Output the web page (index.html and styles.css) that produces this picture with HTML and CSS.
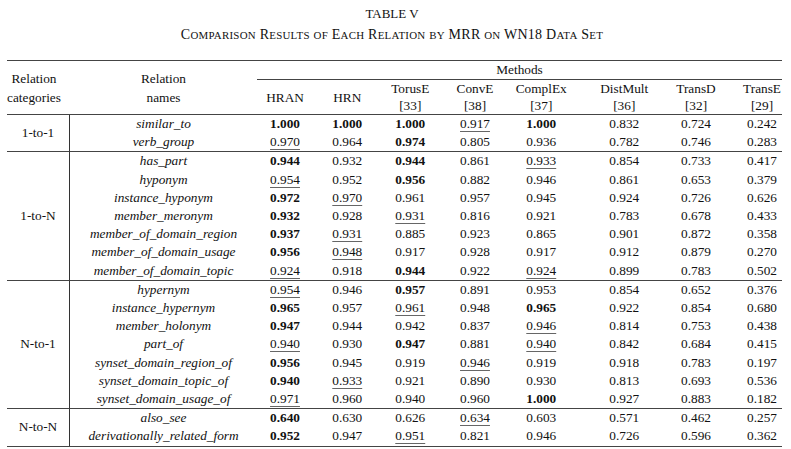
FILE: index.html
```html
<!DOCTYPE html>
<html lang="en">
<head>
<meta charset="utf-8">
<title>Table V</title>
<link rel="stylesheet" href="styles.css">
</head>
<body>
<div class="page">
  <div class="caption">
    <div class="label">TABLE V</div>
    <div class="title">C<span class="sc">omparison</span> R<span class="sc">esults</span> <span class="sc">of</span> E<span class="sc">ach</span> R<span class="sc">elation</span> <span class="sc">by</span> MRR <span class="sc">on</span> WN18 D<span class="sc">ata</span> S<span class="sc">et</span></div>
  </div>
  <table class="results">
    <colgroup>
      <col class="w-cat"><col class="w-name">
      <col class="w-hran"><col class="w-hrn"><col class="w-torus"><col class="w-conv">
      <col class="w-compl"><col class="w-dist"><col class="w-transd"><col class="w-transe">
    </colgroup>
    <thead>
      <tr class="h1">
        <th rowspan="2" class="cat-head">Relation<br>categories</th>
        <th rowspan="2">Relation<br>names</th>
        <th colspan="8" class="methods">Methods</th>
      </tr>
      <tr class="h2">
        <th>HRAN</th><th>HRN</th><th>TorusE<br>[33]</th><th>ConvE<br>[38]</th>
        <th>ComplEx<br>[37]</th><th>DistMult<br>[36]</th><th>TransD<br>[32]</th><th>TransE<br>[29]</th>
      </tr>
    </thead>
    <tbody>
      <tr><td rowspan="2" class="cat">1-to-1</td><td class="rel">similar_to</td><td class="b">1.000</td><td class="b">1.000</td><td class="b">1.000</td><td class="u">0.917</td><td class="b">1.000</td><td>0.832</td><td>0.724</td><td>0.242</td></tr>
      <tr><td class="rel">verb_group</td><td class="u">0.970</td><td>0.964</td><td class="b">0.974</td><td>0.805</td><td>0.936</td><td>0.782</td><td>0.746</td><td>0.283</td></tr>
    </tbody>
    <tbody>
      <tr><td rowspan="7" class="cat">1-to-N</td><td class="rel">has_part</td><td class="b">0.944</td><td>0.932</td><td class="b">0.944</td><td>0.861</td><td class="u">0.933</td><td>0.854</td><td>0.733</td><td>0.417</td></tr>
      <tr><td class="rel">hyponym</td><td class="u">0.954</td><td>0.952</td><td class="b">0.956</td><td>0.882</td><td>0.946</td><td>0.861</td><td>0.653</td><td>0.379</td></tr>
      <tr><td class="rel">instance_hyponym</td><td class="b">0.972</td><td class="u">0.970</td><td>0.961</td><td>0.957</td><td>0.945</td><td>0.924</td><td>0.726</td><td>0.626</td></tr>
      <tr><td class="rel">member_meronym</td><td class="b">0.932</td><td>0.928</td><td class="u">0.931</td><td>0.816</td><td>0.921</td><td>0.783</td><td>0.678</td><td>0.433</td></tr>
      <tr><td class="rel">member_of_domain_region</td><td class="b">0.937</td><td class="u">0.931</td><td>0.885</td><td>0.923</td><td>0.865</td><td>0.901</td><td>0.872</td><td>0.358</td></tr>
      <tr><td class="rel">member_of_domain_usage</td><td class="b">0.956</td><td class="u">0.948</td><td>0.917</td><td>0.928</td><td>0.917</td><td>0.912</td><td>0.879</td><td>0.270</td></tr>
      <tr><td class="rel">member_of_domain_topic</td><td class="u">0.924</td><td>0.918</td><td class="b">0.944</td><td>0.922</td><td class="u">0.924</td><td>0.899</td><td>0.783</td><td>0.502</td></tr>
    </tbody>
    <tbody>
      <tr><td rowspan="7" class="cat">N-to-1</td><td class="rel">hypernym</td><td class="u">0.954</td><td>0.946</td><td class="b">0.957</td><td>0.891</td><td>0.953</td><td>0.854</td><td>0.652</td><td>0.376</td></tr>
      <tr><td class="rel">instance_hypernym</td><td class="b">0.965</td><td>0.957</td><td class="u">0.961</td><td>0.948</td><td class="b">0.965</td><td>0.922</td><td>0.854</td><td>0.680</td></tr>
      <tr><td class="rel">member_holonym</td><td class="b">0.947</td><td>0.944</td><td>0.942</td><td>0.837</td><td class="u">0.946</td><td>0.814</td><td>0.753</td><td>0.438</td></tr>
      <tr><td class="rel">part_of</td><td class="u">0.940</td><td>0.930</td><td class="b">0.947</td><td>0.881</td><td class="u">0.940</td><td>0.842</td><td>0.684</td><td>0.415</td></tr>
      <tr><td class="rel">synset_domain_region_of</td><td class="b">0.956</td><td>0.945</td><td>0.919</td><td class="u">0.946</td><td>0.919</td><td>0.918</td><td>0.783</td><td>0.197</td></tr>
      <tr><td class="rel">synset_domain_topic_of</td><td class="b">0.940</td><td class="u">0.933</td><td>0.921</td><td>0.890</td><td>0.930</td><td>0.813</td><td>0.693</td><td>0.536</td></tr>
      <tr><td class="rel">synset_domain_usage_of</td><td class="u">0.971</td><td>0.960</td><td>0.940</td><td>0.960</td><td class="b">1.000</td><td>0.927</td><td>0.883</td><td>0.182</td></tr>
    </tbody>
    <tbody>
      <tr><td rowspan="2" class="cat">N-to-N</td><td class="rel">also_see</td><td class="b">0.640</td><td>0.630</td><td>0.626</td><td class="u">0.634</td><td>0.603</td><td>0.571</td><td>0.462</td><td>0.257</td></tr>
      <tr><td class="rel">derivationally_related_form</td><td class="b">0.952</td><td>0.947</td><td class="u">0.951</td><td>0.821</td><td>0.946</td><td>0.726</td><td>0.596</td><td>0.362</td></tr>
    </tbody>
  </table>
</div>
</body>
</html>
```

FILE: styles.css
```css
html, body {
  margin: 0;
  padding: 0;
  background: #ffffff;
}

body {
  font-family: "Liberation Serif", "Times New Roman", serif;
  color: #111111;
}

.page {
  width: 775px;
  padding-left: 7px;
}

.caption {
  padding-top: 4px;
  margin-bottom: 14px;
  text-align: center;
  padding-right: 5px;
}

.caption .label {
  font-size: 13px;
  line-height: 20px;
}

.caption .title {
  font-size: 14px;
  line-height: 22px;
  letter-spacing: 0.25px;
}

.caption .title .sc {
  text-transform: uppercase;
  font-size: 0.78em;
}

.results {
  width: 775px;
  table-layout: fixed;
  border-collapse: separate;
  border-spacing: 0;
  border-top: 1px solid #444444;
  border-bottom: 1px solid #444444;
  font-size: 13.3px;
}

.w-cat { width: 63px; }
.w-name { width: 187px; }
.w-hran { width: 59px; }
.w-hrn { width: 62.5px; }
.w-torus { width: 63.5px; }
.w-conv { width: 66px; }
.w-compl { width: 74.5px; }
.w-dist { width: 77.5px; }
.w-transd { width: 69px; }
.w-transe { width: 53px; }

.results th,
.results td {
  box-sizing: border-box;
  padding: 0;
  text-align: center;
  font-weight: normal;
  white-space: nowrap;
  vertical-align: middle;
}

.results thead th {
  line-height: 19px;
  border-bottom: 1px solid #444444;
}

.results .h1 .methods {
  height: 19px;
  line-height: 18px;
}

.results .h2 th {
  height: 35px;
  line-height: 17px;
}

.results .cat-head {
  padding-right: 9px;
}

.results tbody td {
  height: 18.2px;
  line-height: 18.2px;
}

.results tbody + tbody tr:first-child td {
  border-top: 1px solid #444444;
}

.results td.cat {
  border-right: 1px solid #333333;
}

.results td.rel {
  font-style: italic;
}

.results td.b {
  font-weight: bold;
}

.results td.u {
  text-decoration: underline;
  text-decoration-color: #666666;
  text-decoration-thickness: 1px;
  text-underline-offset: 2.5px;
}

/* nudge each method column so its text sits where the original column centres are */
.results tr:not(.h1) > :nth-last-child(8) { padding-right: 3px; }
.results tr:not(.h1) > :nth-last-child(4) { padding-right: 8px; }
.results tr:not(.h1) > :nth-last-child(3) { padding-left: 6px; }
.results tr:not(.h1) > :nth-last-child(2) { padding-left: 3px; }
.results tr:not(.h1) > :nth-last-child(1) { padding-left: 13px; }
```
